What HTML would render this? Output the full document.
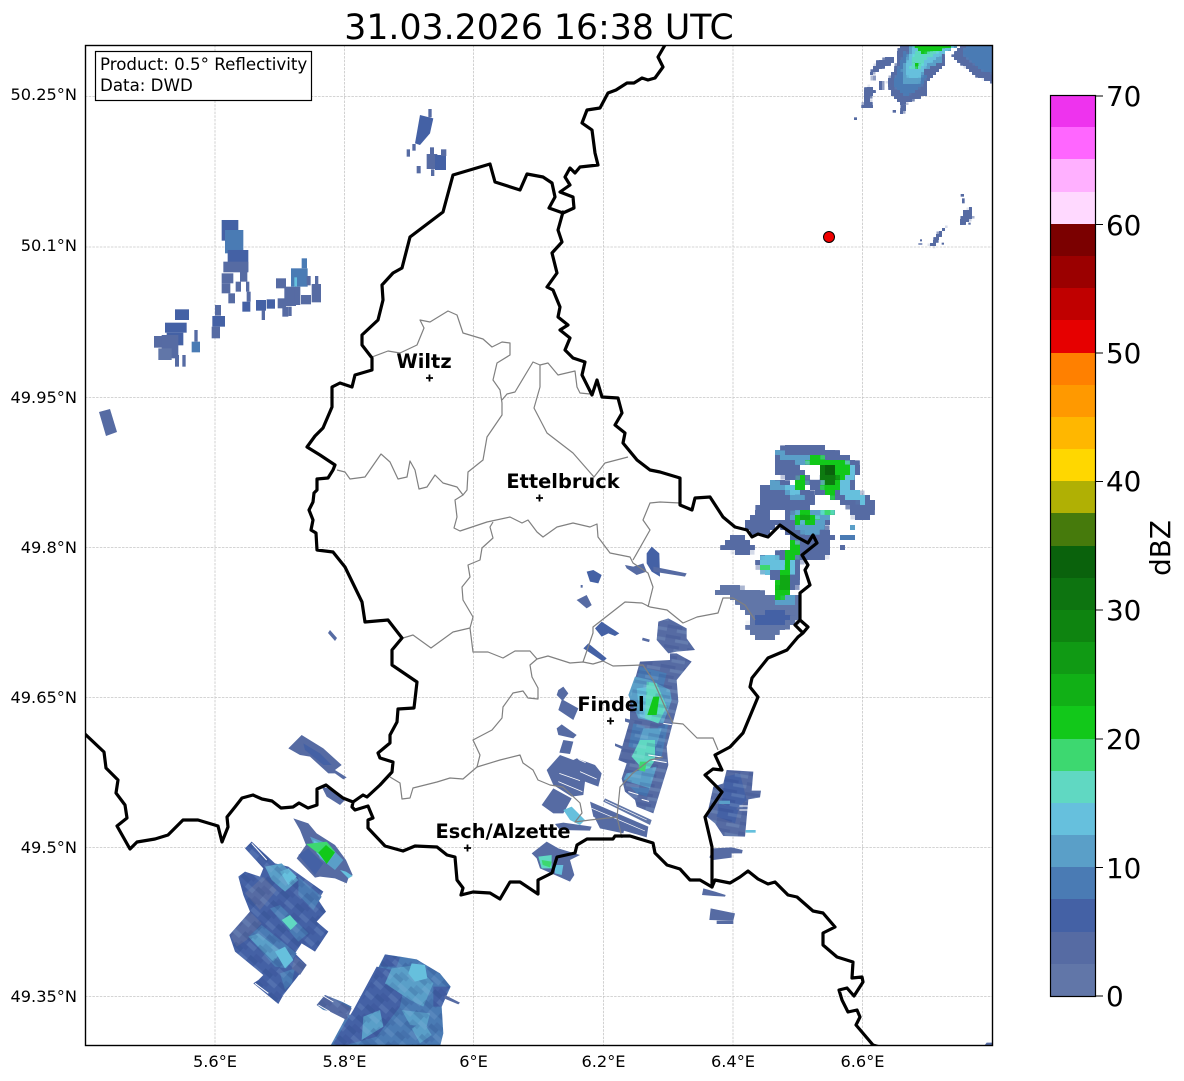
<!DOCTYPE html>
<html>
<head>
<meta charset="utf-8">
<style>
html,body{margin:0;padding:0;background:#fff;width:1184px;height:1081px;overflow:hidden}
svg{display:block}
text{font-family:"DejaVu Sans","Liberation Sans",sans-serif;fill:#000}
.a{fill:#6176a8}.b{fill:#566ba3}.c{fill:#4461a5}.d{fill:#4a7bb4}.e{fill:#5a9fc8}.f{fill:#66c0dd}.g{fill:#60d8c2}.h{fill:#3dd870}.i{fill:#12c81a}.j{fill:#10a814}.k{fill:#0d7a10}.l{fill:#0a620c}.w{fill:#fff}
.gl{stroke:#c6c6c6;stroke-width:.8;stroke-dasharray:2.5 1.2;fill:none}
.gr{stroke:#808080;stroke-width:1.2;fill:none;stroke-linejoin:round}
.bd{stroke:#000;stroke-width:3.2;fill:none;stroke-linejoin:round;stroke-linecap:round}
.t{font-size:16.67px}
.tk{font-size:16.2px}
.cb{font-size:27.8px}
.city{font-size:19.4px;font-weight:bold;text-anchor:middle}
</style>
</head>
<body>
<svg width="1184" height="1081" viewBox="0 0 1184 1081" xmlns="http://www.w3.org/2000/svg">
<defs>
<clipPath id="ax"><rect x="85" y="45" width="908" height="1001"/></clipPath>
<filter id="px5" x="0" y="0" width="1184" height="1081" filterUnits="userSpaceOnUse" color-interpolation-filters="sRGB">
<feFlood x="2" y="2" width="1" height="1"/>
<feComposite width="5" height="5"/>
<feTile result="a"/>
<feComposite in="SourceGraphic" in2="a" operator="in"/>
<feMorphology operator="dilate" radius="2"/>
</filter>
<filter id="px3" x="0" y="0" width="1184" height="1081" filterUnits="userSpaceOnUse" color-interpolation-filters="sRGB">
<feFlood x="1" y="1" width="1" height="1"/>
<feComposite width="3" height="3"/>
<feTile result="a"/>
<feComposite in="SourceGraphic" in2="a" operator="in"/>
<feMorphology operator="dilate" radius="1"/>
</filter>
<pattern id="s40" width="60" height="42" patternUnits="userSpaceOnUse" patternTransform="rotate(42)">
<rect x="0" y="0" width="30" height="14" fill="#20357a" fill-opacity=".2"/>
<rect x="30" y="14" width="30" height="14" fill="#9cc4e8" fill-opacity=".16"/>
<rect x="10" y="28" width="30" height="14" fill="#20357a" fill-opacity=".12"/>
</pattern>
<pattern id="s10" width="70" height="30" patternUnits="userSpaceOnUse" patternTransform="rotate(10)">
<rect x="0" y="0" width="45" height="10" fill="#20357a" fill-opacity=".16"/>
<rect x="30" y="10" width="40" height="10" fill="#b8d8f0" fill-opacity=".16"/>
</pattern>
</defs>
<rect width="1184" height="1081" fill="#fff"/>
<text x="539" y="39" font-size="34.7" text-anchor="middle">31.03.2026 16:38 UTC</text>

<g clip-path="url(#ax)">
<path class="gl" d="M215 45V1046M344.500 45V1046M473.500 45V1046M603.500 45V1046M733 45V1046M862.500 45V1046M85 96.500H993M85 247H993M85 397.500H993M85 547.500H993M85 697.500H993M85 847.500H993M85 996.500H993"/>

<!-- radar: NW area -->
<g transform="translate(85 40) scale(.33333)">
<rect class="c" x="410" y="540" width="50" height="62"/>
<rect class="d" x="420" y="570" width="55" height="70"/>
<rect class="c" x="428" y="630" width="62" height="65"/>
<rect class="b" x="415" y="665" width="75" height="32"/>
<rect class="b" x="410" y="700" width="35" height="30"/>
<rect class="b" x="465" y="695" width="22" height="30"/>
<rect class="b" x="410" y="730" width="26" height="30"/>
<rect class="b" x="430" y="760" width="20" height="30"/>
<rect class="b" x="452" y="725" width="16" height="30"/>
<rect class="b" x="483" y="725" width="10" height="30"/>
<rect class="b" x="485" y="755" width="12" height="30"/>
<rect class="c" x="472" y="785" width="24" height="30"/>
<rect class="c" x="513" y="780" width="30" height="32"/>
<rect class="c" x="545" y="778" width="25" height="28"/>
<rect class="b" x="530" y="810" width="10" height="30"/>
<rect class="b" x="573" y="715" width="30" height="30"/>
<rect class="b" x="598" y="740" width="35" height="58"/>
<rect class="b" x="578" y="775" width="25" height="30"/>
<rect class="b" x="592" y="800" width="18" height="30"/>
<rect class="b" x="610" y="800" width="10" height="28"/>
<rect class="d" x="618" y="685" width="50" height="55"/>
<rect class="d" x="650" y="655" width="16" height="30"/>
<rect class="f" x="628" y="712" width="8" height="28"/>
<rect class="b" x="630" y="740" width="16" height="55"/>
<rect class="b" x="648" y="765" width="30" height="28"/>
<rect class="b" x="665" y="708" width="12" height="28"/>
<rect class="b" x="690" y="708" width="10" height="28"/>
<rect class="b" x="680" y="732" width="28" height="55"/>
<rect class="c" x="270" y="808" width="42" height="32"/>
<rect class="c" x="240" y="848" width="65" height="30"/>
<rect class="c" x="245" y="878" width="50" height="38"/>
<rect class="b" x="207" y="888" width="28" height="35"/>
<rect class="b" x="230" y="885" width="50" height="70"/>
<rect class="a" x="220" y="925" width="40" height="35"/>
<rect class="b" x="270" y="945" width="12" height="35"/>
<rect class="b" x="292" y="945" width="10" height="35"/>
<rect class="b" x="328" y="870" width="10" height="35"/>
<rect class="d" x="320" y="905" width="25" height="32"/>
<rect class="b" x="390" y="795" width="18" height="32"/>
<rect class="c" x="382" y="828" width="38" height="32"/>
<rect class="b" x="380" y="860" width="25" height="35"/>
<polygon class="c" points="1005,225 1045,235 1035,280 1005,315 990,310"/>
<rect class="b" x="1030" y="207" width="10" height="25"/>
<rect class="b" x="982" y="312" width="10" height="20"/>
<rect class="b" x="965" y="328" width="10" height="22"/>
<rect class="b" x="1035" y="322" width="12" height="26"/>
<rect class="b" x="1025" y="342" width="32" height="45"/>
<rect class="c" x="1050" y="345" width="33" height="45"/>
<rect class="b" x="1068" y="328" width="16" height="20"/>
<rect class="b" x="995" y="378" width="12" height="22"/>
<rect class="b" x="1038" y="388" width="10" height="20"/>
</g>
<polygon class="b" points="99,412 110,409 117,432 106,436"/>
<polygon class="b" points="330,630 337,638 335,641 328,633"/>

<!-- radar: NE corner -->
<g filter="url(#px3)">
<g transform="translate(530 40) scale(.33333)">
<polygon class="b" points="1108,15 1095,85 1070,125 1085,165 1115,195 1165,175 1190,165 1190,130 1248,70 1240,40 1290,15"/>
<polygon class="b" points="1295,15 1265,50 1340,110 1385,128 1388,15"/>
<polygon class="d" points="1310,15 1295,40 1350,90 1385,100 1385,15"/>
<polygon class="d" points="1125,30 1100,95 1090,140 1130,170 1175,140 1190,110 1150,60"/>
<polygon class="e" points="1140,30 1115,90 1120,130 1165,135 1185,90 1235,65 1240,35 1290,15 1140,15"/>
<polygon class="f" points="1150,20 1125,85 1135,115 1170,110 1190,75 1240,40 1280,15"/>
<polygon class="g" points="1155,30 1140,85 1170,90 1185,60 1235,30"/>
<polygon class="i" points="1145,15 1175,40 1220,35 1280,15"/>
<polygon class="i" points="1150,65 1170,70 1162,90"/>
<polygon class="b" points="1020,100 1040,65 1075,50 1092,55 1088,70 1050,88 1025,105"/>
<rect class="b" x="1025" y="110" width="10" height="8"/>
<rect class="b" x="1045" y="122" width="15" height="25"/>
<polygon class="b" points="1000,150 1020,135 1035,155 1022,175 1028,205 996,205 1000,180"/>
<polygon class="b" points="1115,195 1132,190 1120,225 1112,222"/>
<polygon class="b" points="1290,555 1298,515 1322,502 1330,532 1310,550"/>
<polygon class="b" points="1190,618 1205,610 1225,575 1250,560 1240,575 1225,600 1212,622"/>
</g>
</g>
<g transform="translate(530 40) scale(.33333)">
<rect class="b" x="972" y="232" width="9" height="8"/>
<rect class="b" x="1088" y="210" width="10" height="8"/>
<rect class="b" x="1292" y="462" width="10" height="8"/>
<rect class="b" x="1296" y="475" width="8" height="15"/>
<rect class="b" x="1315" y="548" width="7" height="6"/>
<rect class="b" x="1170" y="598" width="6" height="6"/>
<rect class="b" x="1165" y="610" width="12" height="4"/>
<rect class="b" x="1235" y="608" width="7" height="6"/>
</g>

<!-- radar: E storm -->
<g filter="url(#px5)">
<g transform="translate(690 430) scale(.33333)">
<polygon class="b" points="255,60 300,45 385,45 465,75 515,105 490,170 555,215 545,265 490,265 478,235 430,205 380,190 340,160 290,150 255,125"/>
<polygon class="b" points="215,170 260,150 330,165 380,195 360,235 430,245 410,290 430,320 415,380 380,395 340,390 320,340 270,285 230,315 185,320 160,280 200,250 205,210"/>
<polygon class="b" points="95,355 130,310 165,320 190,345 185,375 140,370"/>
<polygon class="b" points="200,385 270,365 330,345 360,345 370,380 330,400 320,490 300,470 250,450 240,430 205,425"/>
<polygon class="a" points="75,480 100,465 170,475 250,495 330,490 325,570 315,590 270,595 250,630 205,632 170,590 180,560 145,520 100,490 75,490"/>
<polygon class="c" points="200,560 255,530 310,560 270,590 200,590"/>
<rect class="d" x="450" y="315" width="45" height="12"/>
<rect class="b" x="450" y="342" width="15" height="12"/>
<rect class="e" x="478" y="290" width="18" height="8"/>
<polygon class="e" points="260,65 330,75 360,75 340,105 300,90 270,85"/>
<polygon class="f" points="450,100 500,100 480,170 530,205 530,225 470,205 440,180"/>
<polygon class="e" points="240,155 330,165 340,210 300,210 280,180 235,185"/>
<polygon class="f" points="280,170 320,160 345,185 300,190"/>
<polygon class="e" points="300,250 360,235 430,245 400,290 370,320 320,300"/>
<polygon class="f" points="205,385 260,375 270,410 240,430 205,425"/>
<polygon class="f" points="262,395 310,380 320,430 270,420"/>
<polygon class="e" points="250,490 320,490 320,525 250,530"/>
<polygon class="i" points="340,90 380,75 420,90 490,100 470,140 445,170 435,205 410,200 395,170 405,130"/>
<polygon class="i" points="310,150 340,135 355,165 330,180 315,170"/>
<polygon class="i" points="320,250 350,235 360,255 390,265 360,285 340,275 315,290"/>
<polygon class="i" points="305,335 335,340 330,375 305,395 300,450 295,500 250,510 250,480 275,430 285,380"/>
<polygon class="h" points="210,405 240,400 235,425 205,420"/>
<polygon class="h" points="395,240 430,240 425,255 400,255"/>
<polygon class="j" points="270,440 300,430 295,480 260,480"/>
<polygon class="k" points="395,110 435,100 445,150 420,170 395,150"/>
<polygon class="l" points="405,105 430,105 432,135 410,130"/>
<polygon class="j" points="330,250 350,245 360,265 330,268"/>
<polygon class="w" points="330,105 380,100 395,130 380,145 345,140"/>
<polygon class="w" points="245,240 280,235 290,260 265,275 245,265"/>
</g>
</g>

<!-- radar: central band -->
<g transform="translate(530 600) scale(.33333)">
<polygon class="b" points="330,185 420,180 420,160 440,160 485,185 440,240 445,305 410,440 415,495 370,640 320,620 315,600 285,575 275,535 290,490 265,480 300,360 300,290"/>
<polygon class="b" points="385,65 415,55 470,85 470,115 495,150 440,155 415,160 380,120"/>
<rect class="b" x="337" y="115" width="22" height="8" transform="rotate(15 345 118)"/>
<polygon class="d" points="330,200 410,220 400,260 320,240"/>
<polygon class="e" points="315,230 360,240 420,270 425,300 400,370 325,355 295,285"/>
<polygon class="f" points="320,265 365,260 400,330 385,370 330,350"/>
<polygon class="g" points="350,245 380,250 410,320 385,370 345,355"/>
<polygon class="d" points="310,370 345,380 330,450 295,440"/>
<polygon class="d" points="385,380 415,370 395,470 370,470"/>
<polygon class="e" points="340,385 395,385 378,440 325,430"/>
<polygon class="g" points="330,420 375,420 375,480 350,520 305,470"/>
<polygon class="e" points="290,520 380,500 360,565 280,540"/>
<polygon class="d" points="300,560 360,565 350,590 320,580"/>
<polygon fill="url(#s10)" points="330,185 420,180 420,160 440,160 485,185 440,240 445,305 410,440 415,495 370,640 320,620 315,600 285,575 275,535 290,490 265,480 300,360 300,290"/>
<polygon fill="url(#s10)" points="385,65 415,55 470,85 470,115 495,150 440,155 415,160 380,120"/>
<polygon class="i" points="370,290 388,290 380,345 352,345"/>
<polygon class="h" points="330,485 350,485 345,515 325,510"/>
<path d="M365 480l45 8M295 575l30 9M335 598l22 6M400 370l25 4M355 465l40 6" stroke="#fff" stroke-width="3" fill="none"/>
<polygon class="b" points="85,270 100,260 115,280 100,300 145,325 130,360 85,330 95,300 80,285"/>
<polygon class="b" points="285,355 315,362 310,372 285,365"/>
<polygon class="b" points="255,430 280,440 278,448 255,438"/>
<polygon class="b" points="80,385 95,373 140,405 130,415 85,405"/>
<polygon class="b" points="100,420 130,425 120,462 88,458"/>
<polygon class="b" points="50,510 90,465 130,480 140,475 195,495 215,520 205,560 165,545 160,585 125,590 70,555"/>
<polygon class="b" points="35,615 70,565 125,595 100,640 70,640"/>
<polygon class="b" points="180,605 355,680 350,712 240,680 190,650"/>
<polygon class="a" points="225,595 365,660 360,675 220,605"/>
<polygon class="b" points="195,655 215,645 285,680 280,700 210,685"/>
<path d="M88 520l62 22M85 545l72 30M145 478l22 10M150 515l50 22" stroke="#fff" stroke-width="2.500" fill="none"/>
<path d="M225 602l125 58M185 625l160 68" stroke="#fff" stroke-width="2" fill="none"/>
<polygon class="c" points="195,85 215,65 268,100 255,108 235,100 215,110"/>
<polygon class="c" points="160,145 175,130 230,175 220,185"/>
<polygon class="b" points="140,0 165,0 185,15 175,22"/>
<polygon class="f" points="100,630 125,620 165,660 150,675 120,660"/>
<polygon class="b" points="75,672 100,668 185,680 180,692 90,690"/>
<polygon class="b" points="5,760 50,725 85,745 150,765 120,780 133,825 120,845 75,825 30,805 20,775"/>
<polygon class="f" points="75,795 100,795 95,825 75,820"/>
<polygon class="g" points="25,770 65,765 65,805 35,805"/>
<polygon class="h" points="35,780 65,785 60,802 38,795"/>
</g>

<!-- radar: lower right -->
<g transform="translate(680 760) scale(.33333)">
<polygon class="b" points="140,30 220,35 215,92 243,92 240,112 205,118 195,230 130,228 105,190 80,170 100,80 130,70"/>
<polygon class="c" points="135,50 180,40 200,120 165,150 125,130"/>
<polygon class="c" points="115,130 175,150 165,190 110,170"/>
<polygon fill="url(#s10)" points="140,30 220,35 215,92 243,92 240,112 205,118 195,230 130,228 105,190 80,170 100,80 130,70"/>
<rect class="e" x="118" y="122" width="32" height="10"/>
<rect class="f" x="197" y="210" width="30" height="8"/>
<path d="M178 138h30M178 150h28" stroke="#fff" stroke-width="3"/>
<polygon class="b" points="100,265 155,262 188,270 186,280 155,280 155,293 100,300 88,292"/>
<polygon class="b" points="70,385 105,395 137,405 135,410 103,408 66,405"/>
<polygon class="b" points="92,445 165,460 160,482 88,480"/>
<rect class="b" x="110" y="482" width="50" height="10"/>
<polygon class="b" points="912,858 938,858 938,848 920,848"/>
</g>

<!-- radar: SW -->
<g transform="translate(220 720) scale(.33333)">
<polygon class="b" points="245,45 310,85 365,135 345,150 380,172 370,178 345,160 325,160 270,110 240,105 205,85"/>
<polygon class="c" points="250,70 300,100 335,135 310,135 255,90"/>
<polygon class="b" points="305,200 325,205 375,240 360,255 320,230"/>
<polygon class="b" points="220,295 265,310 290,340 345,375 378,420 398,465 385,475 380,490 345,475 300,470 285,473 230,415 258,375 240,330"/>
<polygon class="c" points="235,405 265,385 310,430 285,465"/>
<polygon class="e" points="270,350 320,370 370,420 345,450 300,415"/>
<polygon class="f" points="280,360 320,380 345,400 320,430 290,400"/>
<polygon class="h" points="258,372 320,365 345,395 320,420 275,385"/>
<polygon class="i" points="295,398 318,375 345,398 320,432"/>
<polygon class="f" points="360,450 378,455 398,468 385,475"/>
<polygon class="c" points="95,365 165,430 205,440 310,515 295,540 318,575 290,605 325,635 285,695 245,670 225,700 260,735 190,825 175,852 100,790 115,780 130,765 45,695 28,645 90,575 70,525 55,470 75,455 120,470 130,445 75,385"/>
<polygon class="b" points="30,645 90,575 125,610 80,660 50,680"/>
<polygon class="e" points="135,440 185,430 235,480 195,515 155,480"/>
<polygon class="f" points="180,455 205,445 230,470 205,495"/>
<polygon class="d" points="235,470 305,530 280,570 235,525"/>
<polygon class="b" points="75,520 130,470 170,510 120,570"/>
<polygon class="d" points="150,565 180,555 265,640 235,665"/>
<polygon class="d" points="85,650 125,615 230,700 200,745 165,740"/>
<polygon class="e" points="85,650 115,640 185,695 160,725"/>
<polygon class="d" points="180,760 225,745 215,790 195,810"/>
<polygon class="b" points="225,710 260,735 240,765 215,745"/>
<polygon fill="url(#s40)" points="95,365 165,430 205,440 310,515 295,540 318,575 290,605 325,635 285,695 245,670 225,700 260,735 190,825 175,852 100,790 115,780 130,765 45,695 28,645 90,575 70,525 55,470 75,455 120,470 130,445 75,385"/>
<polygon class="g" points="185,600 210,585 232,610 212,630"/>
<polygon class="f" points="165,695 195,680 220,720 195,745"/>
<path d="M95 370l45 50M105 790l40 30" stroke="#fff" stroke-width="3" fill="none"/>
<polygon class="d" points="495,703 540,710 590,718 660,760 692,800 665,860 670,940 660,980 330,980 395,860 365,845 315,825 290,855 310,870 395,885 430,830"/>
<polygon class="c" points="400,870 470,740 560,760 540,860 470,950 360,980 340,970"/>
<polygon class="b" points="315,825 350,840 395,865 380,900 330,875 290,855"/>
<polygon class="c" points="495,703 540,712 530,740 480,740"/>
<polygon class="e" points="515,745 590,735 640,790 610,860 570,840 495,790"/>
<polygon class="e" points="430,890 480,870 490,920 425,960"/>
<polygon class="e" points="575,925 610,905 635,945 600,970"/>
<polygon class="e" points="545,870 630,880 620,920 570,915"/>
<polygon class="c" points="640,800 690,800 665,860 640,860"/>
<polygon fill="url(#s40)" points="495,703 540,710 590,718 660,760 692,800 665,860 670,940 660,980 330,980 395,860 365,845 315,825 290,855 310,870 395,885 430,830"/>
<polygon class="f" points="575,730 615,735 622,775 585,785 565,760"/>
<polygon class="b" points="675,825 720,848 715,853 672,835"/>
<path d="M295 855l35 20M310 828l30 18" stroke="#fff" stroke-width="2.500" fill="none"/>
</g>

<!-- mid small cells -->
<g transform="translate(300 300) scale(.33333)">
<polygon class="c" points="1040,760 1055,740 1078,760 1080,830 1055,815 1040,790"/>
<polygon class="b" points="975,795 1000,800 1030,790 1040,815 1010,825 980,805"/>
<polygon class="c" points="860,815 880,810 905,825 895,850 870,845"/>
<polygon class="b" points="830,900 860,885 875,915 860,925"/>
<rect class="b" x="842" y="855" width="6" height="8"/>
<polygon class="b" points="1060,800 1160,820 1155,830 1060,815"/>
</g>
</g>

<g clip-path="url(#ax)">
<!-- canton boundaries -->
<path class="gr" d="M372 357L388 351 400 353 417 345 424 328 420 320 430 322 448 311 457 315 463 333 483 339 492 347 502 342 510 343 510 355 497 363 493 380 500 390 502 403 502 415 487 437 483 460 468 472 467 490 463 495"/>
<path class="gr" d="M337 470L345 472 350 479 365 477 381 454 390 462 398 479 407 477 410 461 415 470 419 489 427 487 435 475 443 483 457 487 463 495 455 500 457 517 454 528 460 531 487 522 510 517 522 523 528 520 537 532 543 537 557 527 573 523 590 527 597 524 598 537 610 553 630 557 633 563 648 573 653 587 648 607"/>
<path class="gr" d="M502 400L507 394 515 392 533 362 540 365 548 363 558 375 575 371 577 387 580 393 590 394"/>
<path class="gr" d="M540 365L540 387 534 408 547 433 573 453 594 477 605 463 628 457"/>
<path class="gr" d="M633 560L650 530 643 520 650 503 660 502 680 503"/>
<path class="gr" d="M493 522L490 527 493 538 482 548 480 560 468 565 470 577 462 587 463 600 473 617 470 628 453 632 431 648 413 635 403 638"/>
<path class="gr" d="M470 628L473 652 488 652 503 658 515 651 530 651 537 659 548 656 570 663 583 662 593 664 603 661 613 666 643 665 653 680 665 707 673 723 683 724 697 738 713 738 718 750"/>
<path class="gr" d="M583 662L593 633 593 627 625 602 642 603 650 607 667 610 683 623 697 617 718 613 723 598 733 598 745 605 755 620"/>
<path class="gr" d="M537 659L530 665 532 677 538 688 538 699 528 698 523 691 513 693 503 707 502 718 492 730 473 740 480 755 477 767 463 779 450 778 437 782 413 788 410 798 402 799 400 783 390 777"/>
<path class="gr" d="M477 767L500 760 520 755 523 763 533 770 538 780 550 785 563 787 580 803 582 813 575 822 590 820 617 817 620 787 633 773 650 760 663 757"/>
<path class="gr" d="M617 817L622 838"/>

<!-- borders -->
<path class="bd" d="M85 734L104 752 106 768 118 780 116 793 125 805 127 818 117 826 130 849 137 842 155 839 168 835 183 820 198 820 218 826 222 842 228 827 227 817 235 807 242 798 253 795 262 799 272 801 281 808 293 807 299 803 308 808 317 805 317 789 326 785 335 792 343 798 353 802 352 807 355 810 368 806 373 818 368 820 368 828 385 846 403 851 415 846 437 847 447 855 455 857 457 880 463 888 461 895 473 892 490 893 500 899 510 882 520 882 538 894 538 880 552 873 557 857 575 853 577 845 587 839 613 839 615 836 630 836 653 843 655 853 667 865 680 869 690 880 700 880 712 887 715 880 730 883 740 877 748 871 758 879 768 884 775 882 788 895 797 897 813 911 823 913 835 927 823 933 823 945 837 957 853 962 852 978 862 977 863 982 854 996 847 988 839 990 842 1000 848 1012 857 1010 860 1017 856 1025 873 1045 880 1047"/>
<path class="bd" d="M353 802L363 795 367 797 380 785 392 772 393 762 380 758 378 753 390 743 390 735 397 722 398 709 414 708 417 682 392 665 392 650 402 638 388 620 365 622 362 602 345 567 333 552 317 550 316 533 311 530 313 520 309 510 313 502 314 493 317 490 317 479 328 478 333 470 335 465 320 455 307 447 315 436 323 428 332 407 332 387 340 383 352 387 355 375 372 370 372 358 362 345 362 335 378 320 383 300 382 285 393 273 402 268 410 237 443 212 453 175 490 164 495 182 520 190 527 174 543 177 552 183 555 197 549 208 563 213 574 208 573 197 560 192 570 185 565 177 570 168 575 173 580 167 598 165 595 153 592 130 582 123 587 110 600 108 608 93 616 90 627 83 634 83 642 78 648 80 655 78 663 67 658 57 665 45"/>
<path class="bd" d="M563 212L558 230 562 242 552 253 557 273 547 287 553 290 560 307 558 317 568 325 560 330 570 338 565 350 573 358 585 362 582 375 592 395 597 380 602 397 618 398 622 413 615 425 625 433 623 443 637 460 650 470 660 472 680 478 680 505 692 510 695 498 710 497 723 517 735 527 747 530 752 537 758 534 768 537 780 525 797 537 808 543 813 535 817 543 802 555 808 565 805 570 810 585 800 593 800 620 795 625 803 633 808 627 800 620 M803 633L798 637 787 650 768 658 752 678 750 687 758 697 743 733 730 747 715 755 722 770 713 769 705 775 722 792 705 817 712 847 712 887"/>
</g>

<!-- frame -->
<rect x="85.500" y="45.500" width="907" height="1000" fill="none" stroke="#000" stroke-width="1.400"/>

<!-- legend box -->
<rect x="95.500" y="51.500" width="216" height="49" fill="#fff" stroke="#000" stroke-width="1.200"/>
<text class="t" x="100" y="70">Product: 0.5° Reflectivity</text>
<text class="t" x="100" y="91">Data: DWD</text>

<!-- cities -->
<path d="M429.500 374.500v7M426 378h7M539.500 494.500v7M536 498h7M610.500 717.500v7M607 721h7M467.500 844.500v7M464 848h7" stroke="#000" stroke-width="1.800"/>
<text class="city" x="424" y="368">Wiltz</text>
<text class="city" x="563" y="488">Ettelbruck</text>
<text class="city" x="611" y="711">Findel</text>
<text class="city" x="503" y="838">Esch/Alzette</text>

<circle cx="829" cy="237" r="5.500" fill="#f00000" stroke="#000" stroke-width="1"/>

<!-- axis labels -->
<g text-anchor="end">
<text class="tk" x="77" y="100">50.25°N</text>
<text class="tk" x="77" y="251">50.1°N</text>
<text class="tk" x="77" y="403">49.95°N</text>
<text class="tk" x="77" y="553">49.8°N</text>
<text class="tk" x="77" y="703">49.65°N</text>
<text class="tk" x="77" y="853">49.5°N</text>
<text class="tk" x="77" y="1002">49.35°N</text>
</g>
<g text-anchor="middle">
<text class="tk" x="215" y="1067">5.6°E</text>
<text class="tk" x="344.500" y="1067">5.8°E</text>
<text class="tk" x="473.500" y="1067">6°E</text>
<text class="tk" x="603.500" y="1067">6.2°E</text>
<text class="tk" x="733" y="1067">6.4°E</text>
<text class="tk" x="862.500" y="1067">6.6°E</text>
</g>

<!-- colorbar -->
<g>
<rect x="1051" y="96" width="44" height="33" fill="#ee33ee"/>
<rect x="1051" y="127" width="44" height="33" fill="#ff66ff"/>
<rect x="1051" y="159" width="44" height="33" fill="#ffb0ff"/>
<rect x="1051" y="192" width="44" height="33" fill="#ffd9ff"/>
<rect x="1051" y="224" width="44" height="33" fill="#7b0000"/>
<rect x="1051" y="256" width="44" height="33" fill="#9b0000"/>
<rect x="1051" y="288" width="44" height="33" fill="#c00000"/>
<rect x="1051" y="320" width="44" height="33" fill="#e60000"/>
<rect x="1051" y="353" width="44" height="33" fill="#ff8000"/>
<rect x="1051" y="385" width="44" height="33" fill="#ff9900"/>
<rect x="1051" y="417" width="44" height="33" fill="#ffb700"/>
<rect x="1051" y="449" width="44" height="33" fill="#ffd700"/>
<rect x="1051" y="481" width="44" height="33" fill="#b0b004"/>
<rect x="1051" y="513" width="44" height="33" fill="#467a0c"/>
<rect x="1051" y="546" width="44" height="33" fill="#0a620c"/>
<rect x="1051" y="578" width="44" height="33" fill="#0d7410"/>
<rect x="1051" y="610" width="44" height="33" fill="#0e8410"/>
<rect x="1051" y="642" width="44" height="33" fill="#109a14"/>
<rect x="1051" y="674" width="44" height="33" fill="#11b016"/>
<rect x="1051" y="706" width="44" height="33" fill="#12c81a"/>
<rect x="1051" y="739" width="44" height="33" fill="#3dd870"/>
<rect x="1051" y="771" width="44" height="33" fill="#60d8c2"/>
<rect x="1051" y="803" width="44" height="33" fill="#66c0dd"/>
<rect x="1051" y="835" width="44" height="33" fill="#5a9fc8"/>
<rect x="1051" y="867" width="44" height="33" fill="#4a7bb4"/>
<rect x="1051" y="899" width="44" height="33" fill="#4461a5"/>
<rect x="1051" y="932" width="44" height="33" fill="#566ba3"/>
<rect x="1051" y="964" width="44" height="32" fill="#6176a8"/>
<rect x="1050.500" y="95.500" width="45" height="901" fill="none" stroke="#000" stroke-width="1.200"/>
<path d="M1096 96h7M1096 224.500h7M1096 353h7M1096 481.500h7M1096 610h7M1096 739h7M1096 867.500h7M1096 996h7" stroke="#000" stroke-width="1.100"/>
</g>
<text class="cb" x="1106" y="106">70</text>
<text class="cb" x="1106" y="235">60</text>
<text class="cb" x="1106" y="363">50</text>
<text class="cb" x="1106" y="491">40</text>
<text class="cb" x="1106" y="620">30</text>
<text class="cb" x="1106" y="749">20</text>
<text class="cb" x="1106" y="878">10</text>
<text class="cb" x="1106" y="1006">0</text>
<text class="cb" transform="translate(1170 548) rotate(-90)" text-anchor="middle">dBZ</text>
</svg>
</body>
</html>
